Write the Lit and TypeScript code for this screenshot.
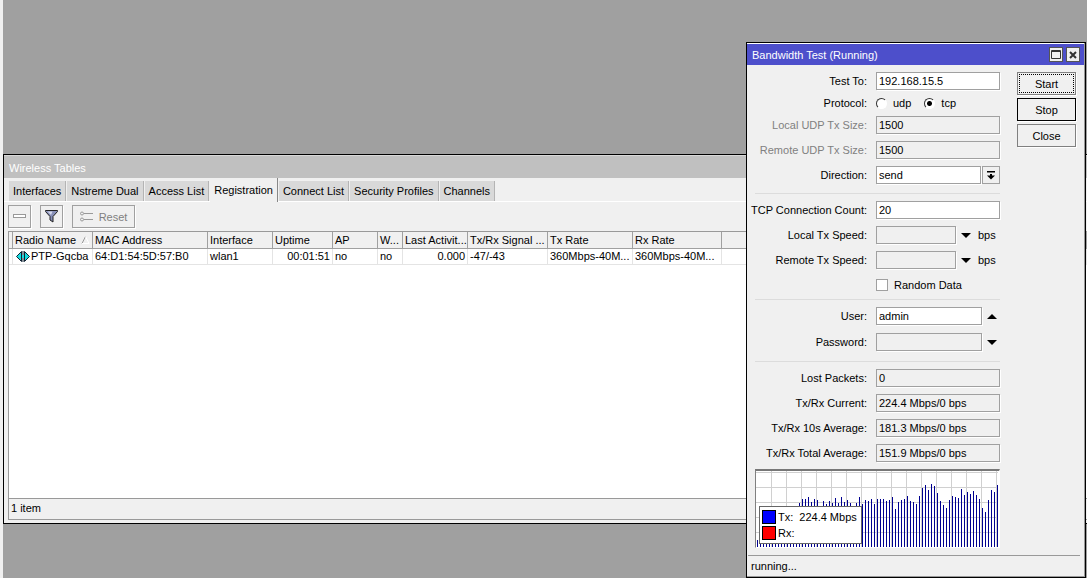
import { LitElement, html, css, svg } from "lit";
import { customElement } from "lit/decorators.js";
import { classMap } from "lit/directives/class-map.js";

const base = css`
  :host, * { box-sizing: border-box; }
  button, input, select {
    font: inherit;
    color: inherit;
    margin: 0;
    border-radius: 0;
    outline: none;
  }
  svg { display: block; flex: none; }
`;

interface Column { title: string; value: string; width: number; right?: boolean; }

const COLUMNS: Column[] = [
  { title: "Radio Name", value: "PTP-Gqcba", width: 80 },
  { title: "MAC Address", value: "64:D1:54:5D:57:B0", width: 115 },
  { title: "Interface", value: "wlan1", width: 65 },
  { title: "Uptime", value: "00:01:51", width: 60, right: true },
  { title: "AP", value: "no", width: 45 },
  { title: "W...", value: "no", width: 25 },
  { title: "Last Activit...", value: "0.000", width: 65, right: true },
  { title: "Tx/Rx Signal ...", value: "-47/-43", width: 80 },
  { title: "Tx Rate", value: "360Mbps-40M...", width: 85 },
  { title: "Rx Rate", value: "360Mbps-40M...", width: 89 },
];

const TABS = ["Interfaces", "Nstreme Dual", "Access List", "Registration", "Connect List", "Security Profiles", "Channels"];

@customElement("wireless-tables")
class WirelessTables extends LitElement {
  static styles = [base, css`
    :host {
      display: flex;
      flex-direction: column;
      border: 1px solid #000;
      border-right: 0;
      background: #f0f0f0;
    }
    .title { height: 23px; padding: 0 5px; background: #c0c0c0; color: #fff; line-height: 24px; border-top: 1px solid #d8d8d8; }
    .tabs { display: flex; align-items: flex-end; height: 24px; padding-left: 5px; border-bottom: 1px solid #fff; }
    .tab {
      height: 20px;
      padding: 0 4px;
      margin-right: 1px;
      border: 0;
      border-right: 1px solid #b4b4b4;
      background: #d9d9d9;
      line-height: 20px;
      white-space: nowrap;
    }
    .tab.active { height: 24px; margin: 0 1px -1px 0; border-color: #888; background: #f0f0f0; line-height: 24px; }
    .tools { display: flex; gap: 9px; padding: 3px 4px; }
    .tool {
      display: flex;
      align-items: center;
      justify-content: center;
      gap: 6px;
      width: 23px;
      height: 23px;
      padding: 0;
      border: 1px solid #a0a0a0;
      background: #f0f0f0;
      box-shadow: 1px 1px 0 #fff;
      color: #808080;
    }
    .tool.reset { width: 63px; }
    .frame { flex: 1; display: flex; flex-direction: column; margin: 0 0 3px 4px; border: 1px solid #999; border-right: 0; background: #fff; overflow: hidden; }
    .data { flex: 1; overflow: hidden; }
    table { width: 100%; border-collapse: separate; border-spacing: 0; table-layout: fixed; }
    th, td { padding: 0 2px; overflow: hidden; white-space: nowrap; font-weight: normal; text-align: left; }
    th { height: 17px; line-height: 16px; border-right: 1px solid #a0a0a0; border-bottom: 1px solid #a0a0a0; background: #f0f0f0; }
    td { height: 16px; line-height: 15px; border-right: 1px solid #e4e4e4; border-bottom: 1px solid #e4e4e4; }
    .right { text-align: right; }
    .edge { width: 4px; padding: 0; }
    .sort, .name { display: flex; align-items: center; justify-content: space-between; }
    .name { justify-content: flex-start; gap: 1px; }
    .status { height: 21px; padding: 0 2px; border-top: 1px solid #999; background: #f0f0f0; line-height: 19px; }
  `];

  render() {
    return html`
      <div class="title">Wireless Tables</div>
      <div class="tabs" role="tablist">
        ${TABS.map((t) => html`<button role="tab" class=${classMap({ tab: true, active: t === "Registration" })}>${t}</button>`)}
      </div>
      <div class="tools">
        <button class="tool" aria-label="Remove">
          <svg width="13" height="5"><rect x=".5" y=".5" width="12" height="3" fill="#fff" stroke="#999"/></svg>
        </button>
        <button class="tool" aria-label="Filter">
          <svg width="13" height="13" viewBox="0 0 13 13">
            <path d="M.5 .5h12v1L8 6.500v5.500l-3-2v-3.500L.5 1.500z" fill="#8890b8" stroke="#222"/>
            <path d="M2.500 1.500h5L6 5z" fill="#d4d8ec"/>
          </svg>
        </button>
        <button class="tool reset">
          <svg width="13" height="11" viewBox="0 0 13 11" fill="none" stroke="#999">
            <circle cx="2" cy="2.500" r="1.500"/><circle cx="2" cy="8.500" r="1.500"/>
            <path d="M4 2.500h9M4 8.500h9"/>
          </svg>
          <span>Reset</span>
        </button>
      </div>
      <div class="frame">
        <div class="data">
          <table>
            <colgroup>
              <col style="width:4px">
              ${COLUMNS.map((c) => html`<col style="width:${c.width}px">`)}
              <col>
            </colgroup>
            <thead>
              <tr>
                <th class="edge"></th>
                ${COLUMNS.map((c, i) => html`<th>${i === 0
                  ? html`<span class="sort">${c.title}<svg width="9" height="8" viewBox="0 0 9 8" fill="none"><path d="M1 7.500L4.500 .5" stroke="#999"/><path d="M4.500 .5L8 7.500H1" stroke="#fff"/></svg></span>`
                  : c.title}</th>`)}
                <th></th>
              </tr>
            </thead>
            <tbody>
              <tr>
                <td class="edge"></td>
                ${COLUMNS.map((c, i) => html`<td class=${classMap({ right: !!c.right })}>${i === 0
                  ? html`<span class="name"><svg width="15" height="11" viewBox="0 0 15 11"><path d="M1.500 5.500L6.500 .500V10.500zM14.500 5.500L9.500 .500V10.500z" fill="#18dce0" stroke="#123"/><path d="M7 4h2v3H7z" fill="#18dce0"/><path d="M8 0v11" stroke="#123" stroke-dasharray="4 3"/></svg>${c.value}</span>`
                  : c.value}</td>`)}
                <td></td>
              </tr>
            </tbody>
          </table>
        </div>
        <div class="status">1 item</div>
      </div>`;
  }
}

/* Bar heights in pixels, one sample every three pixels, oldest first. */
const HISTORY = [
  7, 3, 3, 3, 3, 3, 3, 3, 3, 3, 3, 3, 3, 3,
  44, 48, 48, 50, 45, 48, 47, 40, 46, 43, 46, 44, 49, 44, 50, 45, 47, 44, 40, 44, 50, 43, 47, 46,
  48, 43, 48, 48, 48, 46, 47, 50, 38, 45, 47, 48, 51, 46, 45, 43, 51, 59, 62, 57, 63, 61, 54, 46,
  42, 39, 47, 51, 50, 49, 58, 52, 55, 53, 56, 52, 48, 39, 35, 47, 57, 55, 62,
];

@customElement("bandwidth-test")
class BandwidthTest extends LitElement {
  static styles = [base, css`
    :host {
      display: flex;
      flex-direction: column;
      border: 1px solid #000;
      background: #f0f0f0;
      box-shadow: inset -1px -1px 0 #999;
    }
    .title {
      display: flex;
      align-items: center;
      gap: 3px;
      height: 22px;
      padding: 0 4px 0 5px;
      border-top: 1px solid #fff;
      margin-right: 1px;
      background: #4d4fcb;
      color: #fff;
    }
    .title span { flex: 1; }
    .cap { display: flex; align-items: center; justify-content: center; width: 14px; height: 15px; padding: 0; border: 1px solid #555; background: #f0f0f0; }
    .body { flex: 1; display: flex; gap: 17px; padding: 7px 9px 0 8px; }
    .form { flex: 1; min-width: 0; }
    .group { display: flex; flex-direction: column; gap: 7px; padding: 7px 0 9px; border-bottom: 1px solid #dcdcdc; }
    .group.first { padding-top: 0; }
    .group.check { padding-bottom: 5px; }
    .group.login { gap: 8px; padding-bottom: 10px; }
    .group.last { border: 0; padding-bottom: 7px; }
    .row { display: grid; grid-template-columns: 112px 124px; column-gap: 9px; align-items: center; height: 18px; }
    .row.short { height: 12px; }
    .row > .lbl { justify-self: end; white-space: nowrap; }
    .row > .dim { color: #808080; }
    .ctl { display: flex; align-items: center; min-width: 0; }
    .box {
      flex: 1;
      min-width: 0;
      width: 100%;
      height: 18px;
      padding: 0 2px;
      border: 1px solid #a0a0a0;
      background: #fff;
      box-shadow: 1px 1px 0 #fff;
      appearance: none;
    }
    .box.off { background: #f0f0f0; }
    .box.speed { flex: none; width: 80px; margin-right: 5px; }
    .box.cred { flex: none; width: 106px; margin-right: 5px; }
    .drop { display: flex; align-items: center; justify-content: center; width: 18px; height: 18px; margin-left: 1px; padding: 0; border: 1px solid #a0a0a0; background: #f0f0f0; }
    .arrow { padding: 0; border: 0; background: none; }
    .unit { margin-left: 7px; }
    .opt { display: flex; align-items: center; gap: 6px; margin-right: 13px; }
    .radio {
      appearance: none;
      width: 11px;
      height: 11px;
      border: 1px solid;
      border-color: #333 #fff #fff #333;
      border-radius: 50%;
      background: #fff;
    }
    .radio:checked { background: radial-gradient(circle, #000 0 2px, #fff 3px); }
    .tick { appearance: none; width: 12px; height: 12px; border: 1px solid #a0a0a0; background: #fff; }
    .actions { display: flex; flex-direction: column; gap: 3px; width: 59px; }
    .btn { height: 23px; padding: 0; border: 1px solid #808080; background: #f0f0f0; box-shadow: 1px 1px 0 #fff; }
    .btn.main { border-color: #000; }
    .btn.focus { outline: 1px dotted #000; outline-offset: -3px; }
    .chart { position: relative; height: 79px; border: 1px solid #fff; border-left-color: #808080; border-top: 2px solid #777; background: #fff; overflow: hidden; }
    .legend {
      position: absolute;
      left: 3px;
      bottom: 3px;
      display: grid;
      grid-template-columns: 14px auto;
      gap: 2px;
      width: 103px;
      padding: 3px 2px;
      border: 1px solid #666;
      background: #fff;
      line-height: 14px;
      white-space: nowrap;
    }
    .swatch { height: 14px; border: 1px solid #000; }
    .tx { background: #00f; }
    .rx { background: #f00; }
    .val { margin-left: 6px; }
    .status { height: 22px; margin: 0 5px 0 1px; padding: 0 3px; border-top: 1px solid #999; line-height: 20px; }
  `];

  private field(id: string, label: string, value: string, off = false, dim = false) {
    return html`<div class="row">
      <label class=${classMap({ lbl: true, dim })} for=${id}>${label}</label>
      <input id=${id} class=${classMap({ box: true, off })} .value=${value} ?readonly=${off}>
    </div>`;
  }

  private arrow(up = false) {
    return html`<svg width="10" height="5" viewBox="0 0 10 5"><path d=${up ? "M0 5L5 0L10 5z" : "M0 0H10L5 5z"} fill="#000"/></svg>`;
  }

  private speed(id: string, label: string) {
    return html`<div class="row">
      <label class="lbl" for=${id}>${label}</label>
      <div class="ctl"><input id=${id} class="box off speed"><button class="arrow" aria-label="Expand">${this.arrow()}</button><span class="unit">bps</span></div>
    </div>`;
  }

  render() {
    return html`
      <div class="title">
        <span>Bandwidth Test (Running)</span>
        <button class="cap" aria-label="Maximize"><svg width="10" height="9"><path d="M.5 1.500h9M.5 .5h9v8h-9z" fill="none" stroke="#333"/></svg></button>
        <button class="cap" aria-label="Close window"><svg width="8" height="8"><path d="M1 1l6 6M7 1l-6 6" stroke="#333" stroke-width="2"/></svg></button>
      </div>
      <div class="body">
        <div class="form">
          <div class="group first">
            ${this.field("to", "Test To:", "192.168.15.5")}
            <div class="row short">
              <span class="lbl">Protocol:</span>
              <div class="ctl">
                <label class="opt"><input class="radio" type="radio" name="proto">udp</label>
                <label class="opt"><input class="radio" type="radio" name="proto" checked>tcp</label>
              </div>
            </div>
            ${this.field("ludp", "Local UDP Tx Size:", "1500", true, true)}
            ${this.field("rudp", "Remote UDP Tx Size:", "1500", true, true)}
            <div class="row">
              <label class="lbl" for="dir">Direction:</label>
              <div class="ctl">
                <select id="dir" class="box"><option>send</option></select>
                <button class="drop" aria-label="Open list"><svg width="8" height="9" viewBox="0 0 8 9"><path d="M0 0h8v1.500H0zM3 3h2v1.500h3L4 8.500L0 4.500h3z"/></svg></button>
              </div>
            </div>
          </div>
          <div class="group check">
            ${this.field("count", "TCP Connection Count:", "20")}
            ${this.speed("ltx", "Local Tx Speed:")}
            ${this.speed("rtx", "Remote Tx Speed:")}
            <div class="row"><span></span><label class="opt"><input class="tick" type="checkbox">Random Data</label></div>
          </div>
          <div class="group login">
            <div class="row">
              <label class="lbl" for="user">User:</label>
              <div class="ctl"><input id="user" class="box cred" .value=${"admin"}><button class="arrow" aria-label="Collapse">${this.arrow(true)}</button></div>
            </div>
            <div class="row">
              <label class="lbl" for="pass">Password:</label>
              <div class="ctl"><input id="pass" type="password" class="box off cred"><button class="arrow" aria-label="Expand">${this.arrow()}</button></div>
            </div>
          </div>
          <div class="group last">
            ${this.field("lost", "Lost Packets:", "0", true)}
            ${this.field("cur", "Tx/Rx Current:", "224.4 Mbps/0 bps", true)}
            ${this.field("avg", "Tx/Rx 10s Average:", "181.3 Mbps/0 bps", true)}
            ${this.field("tot", "Tx/Rx Total Average:", "151.9 Mbps/0 bps", true)}
          </div>
          <div class="chart">
            <svg width="243" height="77" shape-rendering="crispEdges">
              ${Array.from({ length: 16 }, (_, i) => svg`<rect x=${15 + i * 15} y="0" width="1" height="77" fill="#d0d0d0"/>`)}
              ${Array.from({ length: 6 }, (_, i) => svg`<rect x="0" y=${1 + i * 15} width="242" height="1" fill="#d0d0d0"/>`)}
              ${HISTORY.map((h, i) => svg`<rect x=${1 + i * 3} y=${76 - h} width="1" height=${h} fill="#000090"/>`)}
            </svg>
            <div class="legend">
              <span class="swatch tx"></span><span>Tx:<span class="val">224.4 Mbps</span></span>
              <span class="swatch rx"></span><span>Rx:</span>
            </div>
          </div>
        </div>
        <div class="actions">
          <button class="btn focus">Start</button>
          <button class="btn main">Stop</button>
          <button class="btn">Close</button>
        </div>
      </div>
      <div class="status">running...</div>`;
  }
}

@customElement("app-root")
class AppRoot extends LitElement {
  static styles = css`
    :host {
      display: block;
      position: relative;
      height: 100vh;
      overflow: hidden;
      border-left: 3px solid #f0f0f0;
      background: #a0a0a0;
      color: #000;
      font: 11px "Liberation Sans", Arial, sans-serif;
    }
    .tables { position: absolute; left: 0; right: 0; top: 154px; height: 370px; }
    .test { position: absolute; right: 1px; top: 42px; bottom: 0; width: 340px; }
  `;

  render() {
    return html`
      <wireless-tables class="tables"></wireless-tables>
      <bandwidth-test class="test"></bandwidth-test>`;
  }
}
